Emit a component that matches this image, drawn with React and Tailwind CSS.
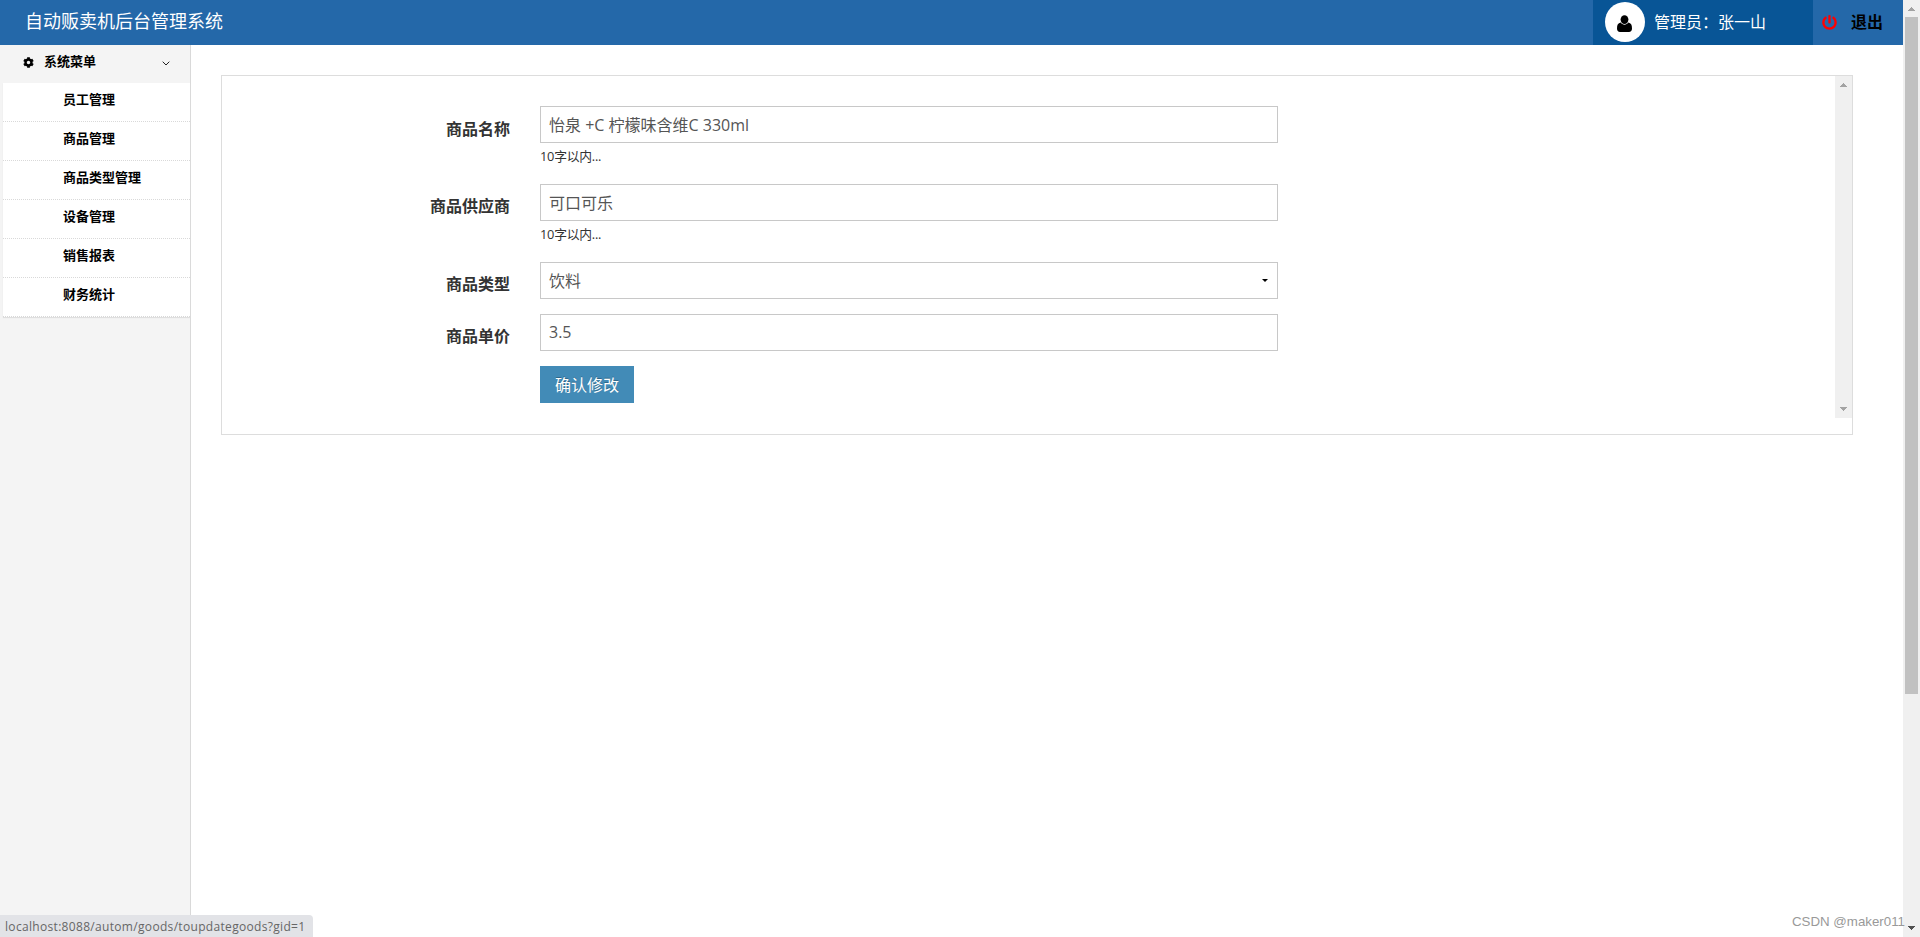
import React from 'react';
import { FaCog, FaPowerOff } from 'react-icons/fa';

const menuItems = ['员工管理', '商品管理', '商品类型管理', '设备管理', '销售报表', '财务统计'];

function Arrow({ up, className }) {
  return (
    <svg className={className} width="7" height="4" viewBox="0 0 7 4" fill="currentColor" shapeRendering="crispEdges">
      <path d={up ? 'M0 4h7v-1h-1v-1h-1v-1h-1v-1h-1v1h-1v1h-1v1h-1z' : 'M0 0h7v1h-1v1h-1v1h-1v1h-1v-1h-1v-1h-1v-1h-1z'} />
    </svg>
  );
}

function Header() {
  return (
    <header className="flex h-[45px] shrink-0 bg-[#2468a9] text-white">
      <h1 className="flex-1 pl-[25px] text-[18px] leading-[42px]">自动贩卖机后台管理系统</h1>
      <div className="flex w-[220px] bg-[#085596] pl-3 pt-0.5">
        <span className="flex h-10 w-10 items-center justify-center rounded-full bg-white pr-px pt-0.5">
          <svg className="h-[17px] w-[15px] text-black" viewBox="0 0 15 17" fill="currentColor">
            <ellipse cx="7.5" cy="4.6" rx="3.9" ry="4.4" />
            <path d="M3.7 7.6C1 8 0 10.2 0 13.4 0 15.5 1.2 17 3 17h9c1.800 0 3-1.500 3-3.600 0-3.200-1-5.400-3.700-5.800C10.300 8.900 9 9.700 7.500 9.700S4.700 8.900 3.700 7.600z" />
          </svg>
        </span>
        <span className="ml-[9px] text-base leading-[41px]">管理员：张一山</span>
      </div>
      <a className="flex w-[90px] items-center pb-px pl-[9px] text-base font-bold text-black">
        <FaPowerOff className="h-[15px] w-[15px] text-[#f00]" />
        <span className="ml-[14px] leading-[42px]">退出</span>
      </a>
    </header>
  );
}

function Sidebar() {
  return (
    <aside className="w-[191px] shrink-0 border-r border-[#d9d9d9] bg-[#f4f4f4] text-[13px] font-bold text-black">
      <div className="flex h-[38px] items-center pb-1 pl-[23px] pr-5">
        <FaCog className="mt-px h-[11px] w-[11px]" />
        <span className="-mt-px ml-[10px] flex-1">系统菜单</span>
        <svg className="mt-[3px]" width="8" height="5" viewBox="0 0 8 5" fill="none" stroke="#222">
          <path d="M.7 .7 4 4 7.300 .7" />
        </svg>
      </div>
      <ul className="ml-[3px] bg-white shadow-[0_1px_1px_#dedede]">
        {menuItems.map((item) => (
          <li key={item} className="h-[39px] border-b border-dotted border-[#d9d9d9] pl-[60px] leading-[32px]">
            {item}
          </li>
        ))}
      </ul>
    </aside>
  );
}

function Field({ label, hint, children }) {
  return (
    <div className="mb-[15px] flex [&:first-child>label]:pt-[11px]">
      <label className="w-[288px] pt-[10px] text-right text-base font-bold leading-6 text-[#333]">{label}</label>
      <div className="ml-[30px] w-[738px]">
        {children}
        {hint && <p className="h-[26px] text-[12.8px] leading-[27px] tracking-[-0.25px] text-[#333]">{hint}</p>}
      </div>
    </div>
  );
}

function Input({ value }) {
  return (
    <input
      className="block h-[37px] w-full border border-[#c8c8c8] bg-white px-2 pb-0.5 text-base text-[#555] outline-none"
      defaultValue={value}
    />
  );
}

function GoodsForm() {
  return (
    <section className="h-[360px] border border-[#ddd]">
      <div className="flex h-[342px] justify-between">
        <form className="pt-[30px]">
          <Field label="商品名称" hint="10字以内...">
            <Input value="怡泉 +C 柠檬味含维C 330ml" />
          </Field>
          <Field label="商品供应商" hint="10字以内...">
            <Input value="可口可乐" />
          </Field>
          <Field label="商品类型">
            <div className="flex h-[37px] items-center justify-between border border-[#c8c8c8] pl-2 pr-[9px] text-base text-[#555]">
              <span>饮料</span>
              <svg width="6" height="3" viewBox="0 0 6 3">
                <path d="M0 0h6L3 3z" />
              </svg>
            </div>
          </Field>
          <Field label="商品单价">
            <Input value="3.5" />
          </Field>
          <Field label="">
            <button type="button" className="block h-[37px] w-[94px] bg-[#428bb7] pt-px text-base text-white [text-shadow:0_-1px_0_rgba(0,0,0,0.25)]">
              确认修改
            </button>
          </Field>
        </form>
        <div className="flex w-[17px] flex-col items-center justify-between bg-[#f0f0f0] pb-[7px] pt-[7px] text-[#a3a3a3]">
          <Arrow up />
          <Arrow />
        </div>
      </div>
    </section>
  );
}

export default function App() {
  return (
    <div className="relative flex h-[937px] w-[1920px] overflow-hidden bg-white font-['Open_Sans','Noto_Sans_CJK_SC',sans-serif]">
      <div className="flex flex-1 flex-col">
        <Header />
        <div className="flex flex-1">
          <Sidebar />
          <main className="flex-1 pl-[30px] pr-[50px] pt-[30px]">
            <GoodsForm />
          </main>
        </div>
      </div>

      {/* page scrollbar */}
      <div className="flex w-[17px] flex-col items-center bg-[#f0f0f0]">
        <Arrow up className="mt-[7px] text-[#a3a3a3]" />
        <div className="mt-1.5 h-[677px] w-[13px] bg-[#c1c1c1]" />
        <Arrow className="mb-[7px] mt-auto text-[#505050]" />
      </div>

      {/* link status */}
      <div className="absolute bottom-0 left-0 h-[22px] w-[313px] whitespace-nowrap rounded-tr bg-[#e2e3e7] pl-[5px] text-[12px] leading-[23px] tracking-[0.32px] text-[#666]">
        localhost:8088/autom/goods/toupdategoods?gid=1
      </div>
      <div className="absolute bottom-[5px] right-[15px] whitespace-nowrap font-['Liberation_Sans',sans-serif] text-[13.3px] leading-5 text-[#999]">
        CSDN @maker011
      </div>
    </div>
  );
}
